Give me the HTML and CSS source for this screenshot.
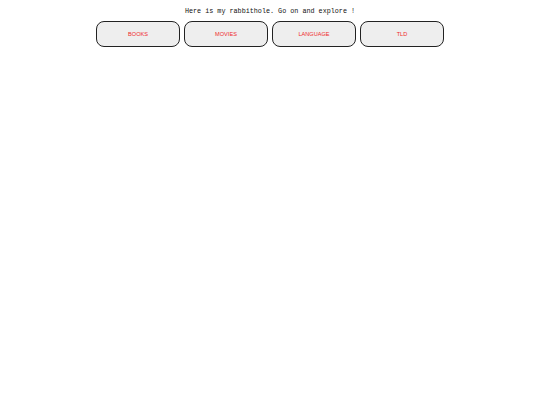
FILE: index.html
```html
<!DOCTYPE html>
<html>
<head>
<meta charset="utf-8">
<link rel="stylesheet" href="styles.css">
</head>
<body>
<p class="intro">Here is my rabbithole. Go on and explore !</p>
<nav class="menu">
  <a class="btn" href="#">BOOKS</a>
  <a class="btn" href="#">MOVIES</a>
  <a class="btn" href="#">LANGUAGE</a>
  <a class="btn" href="#">TLD</a>
</nav>
</body>
</html>
```
FILE: styles.css
```css
html, body {
  margin: 0;
  padding: 0;
  background: #fff;
}
.intro {
  margin: 0;
  padding-top: 6px;
  text-align: center;
  font-family: "Liberation Mono", "DejaVu Sans Mono", monospace;
  font-size: 6.75px;
  line-height: 10px;
  color: #111;
}
.menu {
  display: flex;
  justify-content: center;
  gap: 4px;
  margin-top: 5px;
}
.btn {
  box-sizing: border-box;
  width: 84px;
  height: 26px;
  display: flex;
  align-items: center;
  justify-content: center;
  background: #eeeeee;
  border: 1px solid #222;
  border-radius: 8px;
  color: #ee2a2a;
  font-family: "Liberation Sans", Arial, sans-serif;
  font-size: 5.6px;
  text-decoration: none;
}
```
